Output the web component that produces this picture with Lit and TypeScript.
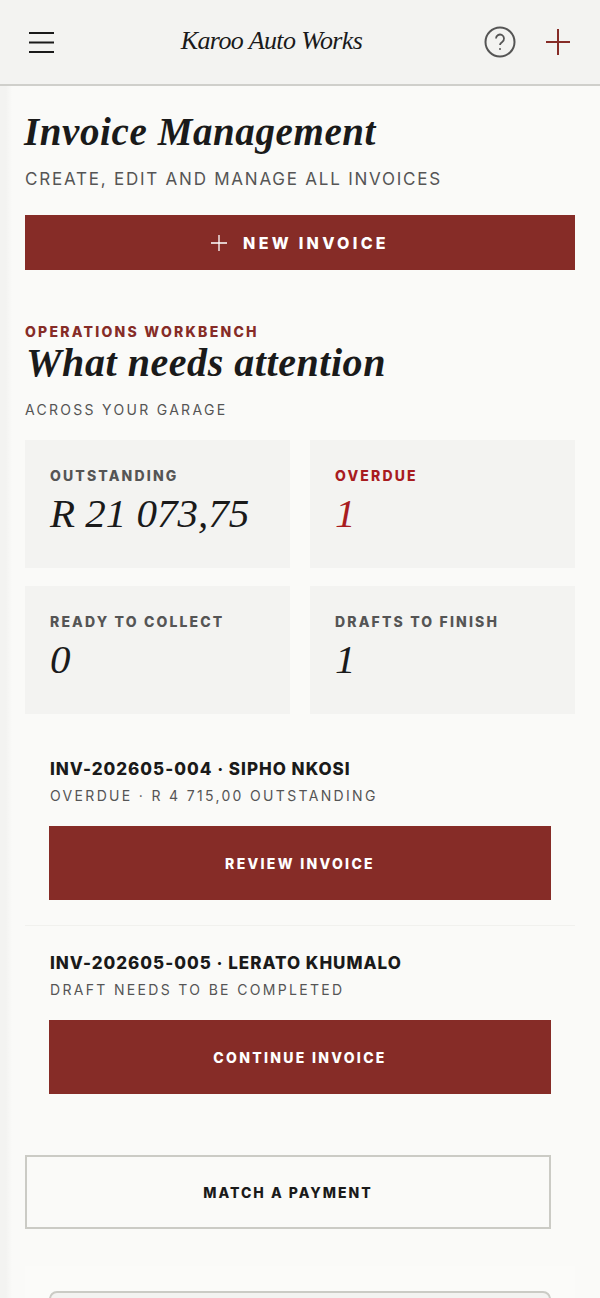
import { LitElement, html, css } from "lit";
import { customElement } from "lit/decorators.js";

@customElement("app-root")
export class AppRoot extends LitElement {
  static styles = css`
    :host { display: block; width: 600px; height: 1298px; overflow: hidden; background: linear-gradient(90deg, #f3f3f1 0, #f3f3f1 6px, #fafaf8 12px); font-family: "Inter", "Liberation Sans", sans-serif; color: #1a1a1a; }
    header { box-sizing: border-box; height: 86px; background: #f3f3f1; border-bottom: 2px solid #cfcfcb; display: flex; align-items: center; padding: 0 30px 0 29px; }
    .menu { width: 25px; height: 23px; display: block; flex: none; }
    .brand { flex: 1; text-align: center; font: italic 400 26px "Liberation Serif", serif; letter-spacing: -0.6px; color: #1a1a1a; margin-top: -3px; padding-left: 5px; }
    .icons { display: flex; gap: 30px; align-items: center; }
    .icons svg { display: block; }
    main { padding: 0 25px; display: flex; flex-direction: column; }
    h1 { margin: 26px 0 0; margin-left: -1px; font: italic 700 39px/40px "Liberation Serif", serif; letter-spacing: 0.6px; color: #1a1a1a; }
    .sub { margin-top: 15px; font-size: 17px; line-height: 24px; letter-spacing: 1.77px; color: #555; }
    .btn { box-sizing: border-box; background: #862c27; color: #fff; font-weight: 800; letter-spacing: 2.3px; display: flex; align-items: center; justify-content: center; }
    .new { height: 55px; margin-top: 24px; font-size: 16px; gap: 16px; letter-spacing: 3.3px; }
    .eyebrow { margin-top: 53px; font-size: 14px; line-height: 18px; font-weight: 800; letter-spacing: 2.25px; color: #862c27; }
    h2 { margin: 0; font: italic 700 40px/44px "Liberation Serif", serif; letter-spacing: 0.55px; padding-left: 1px; color: #1a1a1a; }
    .across { margin-top: 15px; font-size: 14px; line-height: 20px; letter-spacing: 2.3px; color: #555; }
    .grid { display: grid; grid-template-columns: 265px 265px; gap: 18px 20px; margin-top: 20px; }
    .card { box-sizing: border-box; height: 128px; background: #f3f3f1; padding: 27px 25px; }
    .label { font-size: 14px; line-height: 18px; font-weight: 800; letter-spacing: 2.15px; color: #555; }
    .value { margin-top: 4px; font: italic 400 41px/48px "Liberation Serif", serif; color: #1a1a1a; }
    .red .label, .red .value { color: #a81c1f; }
    .item { padding: 0 24px; }
    .item.first { margin-top: 42px; }
    .item.second { border-top: 1px solid #f1f1ee; margin: 25px 0 0; padding-top: 24px; }
    .name { padding-left: 1px; font-size: 17px; line-height: 26px; font-weight: 800; letter-spacing: 1px; color: #1a1a1a; }
    .meta { padding-left: 1px; margin-top: 4px; font-size: 14px; line-height: 20px; letter-spacing: 2.33px; color: #555; }
    .act { height: 74px; margin-top: 20px; font-size: 14px; }
    .match { box-sizing: border-box; width: 526px; height: 74px; margin-top: 61px; border: 2px solid #cbcbc5; display: flex; align-items: center; justify-content: center; font-size: 14px; font-weight: 800; letter-spacing: 2px; color: #1a1a1a; }
    .panel { margin-top: 37px; padding: 25px 24px 0; background: #fbfbf9; }
    .field { height: 40px; box-sizing: border-box; background: #f3f3f1; border: 2px solid #cbcbc5; border-radius: 8px; }
  `;

  render() {
    return html`
      <header>
        <svg class="menu" viewBox="0 0 25 23" fill="none" stroke="#1a1a1a" stroke-width="2.2"><path d="M0 2h25M0 11.5h25M0 21h25"/></svg>
        <div class="brand">Karoo Auto Works</div>
        <div class="icons">
          <svg width="32" height="32" viewBox="0 0 32 32" fill="none" stroke="#555" stroke-width="2"><circle cx="16" cy="16" r="14.5"/><path d="M12 12.5a4 4 0 1 1 6.2 3.4c-1.4.9-2.2 1.7-2.2 3.1" stroke-width="1.8"/><circle cx="16" cy="23" r="1" fill="#555" stroke="none"/></svg>
          <svg width="24" height="26" viewBox="0 0 24 26" fill="none" stroke="#862c27" stroke-width="2"><path d="M12 0v26M0 13h24"/></svg>
        </div>
      </header>
      <main>
        <h1>Invoice Management</h1>
        <div class="sub">CREATE, EDIT AND MANAGE ALL INVOICES</div>
        <div class="btn new">
          <svg width="16" height="16" viewBox="0 0 16 16" fill="none" stroke="#fff" stroke-width="1.3"><path d="M8 0v16M0 8h16"/></svg>
          <span>NEW INVOICE</span>
        </div>
        <div class="eyebrow">OPERATIONS WORKBENCH</div>
        <h2>What needs attention</h2>
        <div class="across">ACROSS YOUR GARAGE</div>
        <div class="grid">
          <div class="card"><div class="label">OUTSTANDING</div><div class="value">R 21 073,75</div></div>
          <div class="card red"><div class="label">OVERDUE</div><div class="value">1</div></div>
          <div class="card"><div class="label">READY TO COLLECT</div><div class="value">0</div></div>
          <div class="card"><div class="label">DRAFTS TO FINISH</div><div class="value">1</div></div>
        </div>
        <div class="item first">
          <div class="name">INV-202605-004 · SIPHO NKOSI</div>
          <div class="meta">OVERDUE · R 4 715,00 OUTSTANDING</div>
          <div class="btn act">REVIEW INVOICE</div>
        </div>
        <div class="item second">
          <div class="name">INV-202605-005 · LERATO KHUMALO</div>
          <div class="meta">DRAFT NEEDS TO BE COMPLETED</div>
          <div class="btn act">CONTINUE INVOICE</div>
        </div>
        <div class="match">MATCH A PAYMENT</div>
        <div class="panel"><div class="field"></div></div>
      </main>
    `;
  }
}
